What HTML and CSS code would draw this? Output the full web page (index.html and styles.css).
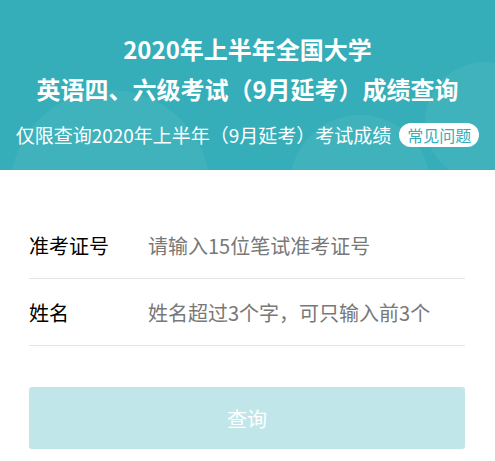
FILE: index.html
```html
<!DOCTYPE html>
<html lang="zh-CN">
<head>
<meta charset="utf-8">
<title>2020年上半年全国大学英语四、六级考试成绩查询</title>
<link rel="stylesheet" href="styles.css">
</head>
<body>
<header class="hero">
  <span class="bubble bubble-left"></span>
  <span class="bubble bubble-mid"></span>
  <span class="bubble bubble-right"></span>
  <h1 class="hero-title">2020年上半年全国大学<br>英语四、六级考试（9月延考）成绩查询</h1>
  <p class="hero-sub">仅限查询2020年上半年（9月延考）考试成绩<a class="faq" href="#">常见问题</a></p>
</header>
<main class="form">
  <label class="row">
    <span class="row-label">准考证号</span>
    <input class="row-input" type="text" placeholder="请输入15位笔试准考证号">
  </label>
  <label class="row">
    <span class="row-label">姓名</span>
    <input class="row-input" type="text" placeholder="姓名超过3个字，可只输入前3个">
  </label>
  <button class="submit" type="button">查询</button>
</main>
</body>
</html>
```
FILE: styles.css
```css
html, body {
  margin: 0;
  padding: 0;
  background: #ffffff;
}
body {
  font-family: "Noto Sans CJK SC", "Noto Sans", sans-serif;
  width: 495px;
  overflow: hidden;
}
.hero {
  position: relative;
  overflow: hidden;
  height: 170px;
  box-sizing: border-box;
  padding-top: 29px;
  background: #35aeb9;
  color: #ffffff;
  text-align: center;
}
.bubble {
  position: absolute;
  border-radius: 50%;
  background: rgba(255, 255, 255, 0.055);
}
.bubble-left {
  left: 10px;
  top: 90px;
  width: 200px;
  height: 200px;
}
.bubble-mid {
  left: 290px;
  top: 115px;
  width: 140px;
  height: 140px;
}
.bubble-right {
  left: 425px;
  top: 62px;
  width: 120px;
  height: 120px;
}
.hero-title {
  position: relative;
  margin: 0;
  font-size: 24px;
  font-weight: 700;
  line-height: 40px;
}
.hero-sub {
  position: relative;
  margin: 13px 0 0;
  font-size: 19px;
  line-height: 26px;
  display: flex;
  justify-content: center;
  align-items: center;
}
.faq {
  margin-left: 8px;
  padding: 0 8px;
  height: 24px;
  line-height: 24px;
  border-radius: 12px;
  background: #ffffff;
  color: #35aeb9;
  font-size: 16px;
  text-decoration: none;
}
.form {
  padding: 42px 30px 0 29px;
}
.row {
  display: flex;
  align-items: center;
  height: 66px;
  border-bottom: 1px solid #e5e5e5;
}
.row-label {
  width: 119px;
  flex: none;
  font-size: 20px;
  color: #000000;
}
.row-input {
  flex: 1;
  min-width: 0;
  border: none;
  outline: none;
  padding: 0;
  background: transparent;
  font-family: inherit;
  font-size: 20px;
  color: #333333;
}
.row-input::placeholder {
  color: #787878;
}
.submit {
  display: block;
  width: 100%;
  height: 62px;
  margin-top: 41px;
  border: none;
  border-radius: 3px;
  background: #c1e6e9;
  color: #ffffff;
  font-family: inherit;
  font-size: 20px;
}
```
